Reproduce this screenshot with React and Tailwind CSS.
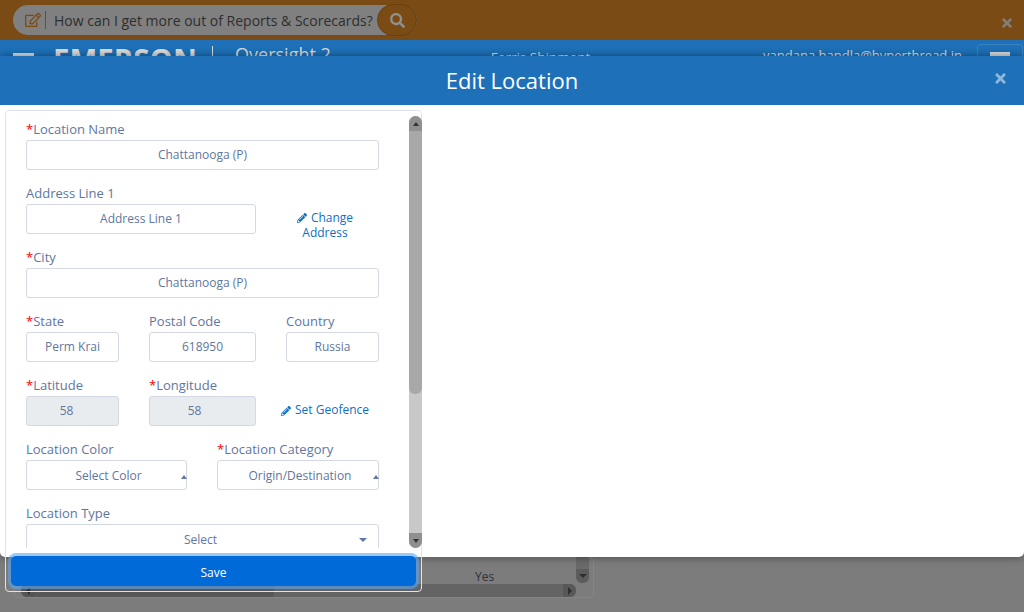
import { FaSearch, FaRegEdit, FaPencilAlt, FaTimes } from "react-icons/fa";

function Label({ req, children }) {
  return (
    <div className="h-[21px] text-[13px] leading-[20px] text-[#6076a0]">
      {req && <span className="text-[#f00]">*</span>}
      {children}
    </div>
  );
}

function Field({ label, req, value, className = "", disabled, caret, textCls = "" }) {
  return (
    <div className={className}>
      <Label req={req}>{label}</Label>
      <div
        className={`relative flex h-[30px] items-center justify-center rounded-[3px] border border-[#d3d8e2] text-[12px] text-[#6076a0] ${
          disabled ? "bg-[#e9ecef]" : "bg-white"
        }`}
      >
        <span className={textCls}>{value}</span>
        {caret === "up" && (
          <span className="absolute right-[-1px] top-[14px] h-0 w-0 border-x-[3px] border-b-[4px] border-x-transparent border-b-[#6076a0]" />
        )}
        {caret === "down" && (
          <span className="absolute right-[11px] top-[13px] h-0 w-0 border-x-[4px] border-t-[4px] border-x-transparent border-t-[#6076a0]" />
        )}
      </div>
    </div>
  );
}

function ScrollArrow({ up }) {
  return (
    <div className="flex h-[15px] items-center justify-center bg-[#8f8f8f]">
      <span
        className={
          up
            ? "h-0 w-0 border-x-[3px] border-b-[4px] border-x-transparent border-b-[#333]"
            : "h-0 w-0 border-x-[3px] border-t-[4px] border-x-transparent border-t-[#333]"
        }
      />
    </div>
  );
}

export default function App() {
  return (
    <div className="relative h-[612px] w-[1024px] overflow-hidden bg-[#7c7c7c] font-['Open_Sans',sans-serif]">
      {/* PAGE BEHIND THE MODAL */}
      <div className="flex h-[40px] items-center justify-between bg-[#7b4b15] pl-[13px] pr-[10px]">
        <div className="flex h-[30px] w-[404px] items-center rounded-full bg-[#808080] pl-[12px]">
          <FaRegEdit size={16} className="text-[#7b4b15]" />
          <span className="ml-[4px] mr-[8px] h-[18px] w-px bg-[#7b4b15]" />
          <span className="whitespace-nowrap text-[14px] text-[#2e2e2e]">How can I get more out of Reports &amp; Scorecards?</span>
          <div className="ml-auto flex h-[32px] w-[40px] shrink-0 items-center justify-center rounded-full border border-[#6a3f10] bg-[#7b4b15]">
            <FaSearch size={15} className="text-[#8f8f8f]" />
          </div>
        </div>
        <FaTimes size={14} className="mt-[5px] text-[#80807e]" />
      </div>
      <div className="flex h-[40px] items-start bg-[#1e71b8] pl-[13px] pt-[4px] text-[#ddd]">
        <div className="mt-[9px] h-[4px] w-[21px] bg-[#ddd]" />
        <div className="ml-[19px] mt-[-1px] text-[29.5px] font-bold leading-[34px]">EMERSON</div>
        <div className="ml-[15px] mt-[2px] h-[30px] w-px bg-[#ddd]" />
        <div className="ml-[22px] mt-[-3px] text-[18px]">Oversight 2</div>
        <div className="ml-[160px] mt-[3px] whitespace-nowrap text-[13.5px]">Ferris Shipment</div>
        <div className="ml-auto mt-[2px] text-[13px]">vandana.handla@hyperthread.in</div>
        <div className="ml-[15px] mr-[1px] h-[30px] w-[46px] rounded-[3px] border border-[#3b82c0] px-[12px] pt-[7px]">
          <div className="h-[4px] bg-[#ddd]" />
        </div>
      </div>

      <div className="absolute left-[14px] top-[557px] flex h-[41px] w-[580px] flex-col rounded-[4px] border border-[#858585]">
        <div className="h-[26px] pl-[460px] pt-[10px] text-[12px] leading-[18px] text-[#2e3040]">Yes</div>
        <div className="ml-[6px] flex h-[13px] w-[555px] items-center rounded-[6px] bg-[#646464]">
          <div className="flex h-[13px] w-[14px] items-center justify-center rounded-l-[6px] bg-[#555]">
            <span className="h-0 w-0 border-y-[4px] border-r-[4px] border-y-transparent border-r-[#2e2e2e]" />
          </div>
          <div className="h-[13px] w-[239px] rounded-[3px] bg-[#575757]" />
          <div className="ml-auto flex h-[13px] w-[13px] items-center justify-center rounded-r-[6px] bg-[#585858]">
            <span className="h-0 w-0 border-y-[4px] border-l-[4px] border-y-transparent border-l-[#2e2e2e]" />
          </div>
        </div>
      </div>
      <div className="absolute left-[576px] top-[557px] flex h-[26px] w-[13px] flex-col justify-end overflow-hidden rounded-b-[6px] bg-[#6a6a6a]">
        <div className="flex h-[14px] items-center justify-center bg-[#5c5c5c]">
          <span className="h-0 w-0 border-x-[4px] border-t-[4px] border-x-transparent border-t-[#2e2e2e]" />
        </div>
      </div>

      {/* MODAL */}
      <div className="absolute left-0 top-[56px] h-[501px] w-full rounded-b-[5px] bg-white shadow-[0_0_8px_rgba(0,0,0,0.45)]">
        <div className="relative flex h-[49px] items-center justify-center bg-[#1e71b8] text-[22px] text-white">
          Edit Location
          <FaTimes size={15} className="absolute right-[16px] top-[15px] text-[#8fb8dc]" />
        </div>
      </div>

      {/* FORM PANEL */}
      <div className="absolute left-[5px] top-[110px] h-[482px] w-[417px] rounded-[4px] border border-[#dfe3e8]">
        <div className="relative h-[437px] rounded-t-[4px] bg-white">
          <div className="h-full overflow-hidden pl-[20px] pt-[8px]">
            <div className="w-[353px]">
              <Field label="Location Name" req value="Chattanooga (P)" className="mb-[13px]" />

              <div className="mb-[13px] flex h-[51px]">
                <Field label="Address Line 1" value="Address Line 1" className="w-[230px]" />
                <div className="ml-[29px] w-[80px] pt-[27px] text-center text-[12px] leading-[15px] text-[#0f6fc6]">
                  <FaPencilAlt size={10} className="mr-[4px] inline align-[-1px]" />
                  Change Address
                </div>
              </div>

              <Field label="City" req value="Chattanooga (P)" className="mb-[13px]" />

              <div className="mb-[13px] flex">
                <Field label="State" req value="Perm Krai" className="w-[93px]" />
                <Field label="Postal Code" value="618950" className="ml-[30px] w-[107px]" />
                <Field label="Country" value="Russia" className="ml-[30px] w-[93px]" />
              </div>

              <div className="mb-[13px] flex">
                <Field label="Latitude" req value="58" disabled textCls="mr-[12px]" className="w-[93px]" />
                <Field label="Longitude" req value="58" disabled textCls="mr-[16px]" className="ml-[30px] w-[107px]" />
                <div className="ml-[25px] flex h-[51px] items-end whitespace-nowrap pb-[7px] text-[12px] text-[#0f6fc6]">
                  <FaPencilAlt size={10} className="mb-[3px] mr-[4px]" />
                  Set Geofence
                </div>
              </div>

              <div className="mb-[13px] flex">
                <Field label="Location Color" value="Select Color" caret="up" textCls="ml-[4px] mt-[2px]" className="w-[161px]" />
                <Field label="Location Category" req value="Origin/Destination" caret="up" textCls="ml-[4px] mt-[2px]" className="ml-[30px] w-[162px]" />
              </div>

              <Field label="Location Type" value="Select" caret="down" textCls="mr-[4px] mt-[2px]" />
            </div>
          </div>

          <div className="absolute right-[-1px] top-[5px] flex h-[432px] w-[13px] flex-col overflow-hidden rounded-full bg-[#c8c8c8]">
            <ScrollArrow up />
            <div className="h-[263px] rounded-b-[6px] bg-[#a8a8a8]" />
            <div className="flex-1" />
            <ScrollArrow />
          </div>
        </div>

        <button className="absolute left-[5px] top-[445px] flex h-[30px] w-[405px] items-center justify-center rounded-[5px] bg-[#006ad9] pt-[3px] text-[12px] font-medium text-white shadow-[0_0_0_3px_rgba(90,165,240,0.6)]">
          Save
        </button>
      </div>
    </div>
  );
}
